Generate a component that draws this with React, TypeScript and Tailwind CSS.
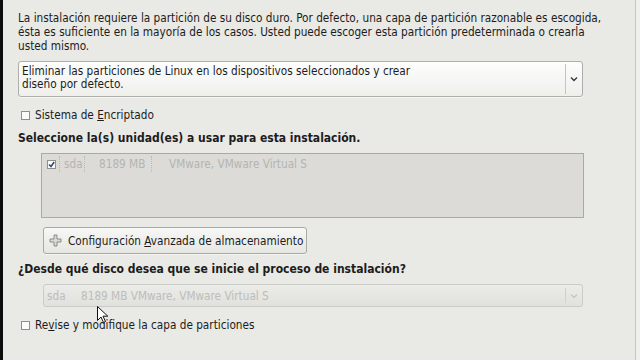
import React from 'react';

// Particionado del disco — pantalla del instalador (Anaconda, tema Clearlooks)

const Check = ({ checked = false }: { checked?: boolean }) => (
  <span className="w-[9px] h-[9px] border border-[#8f8f8b] bg-[#fbfbfa] flex items-center justify-center shrink-0">
    {checked && (
      <svg width="7" height="7" viewBox="0 0 7 7">
        <path d="M1 3.5 L3 5.5 L6.2 1" stroke="#2f4d7a" strokeWidth="1.6" fill="none" />
      </svg>
    )}
  </span>
);

const Chevron = ({ color }: { color: string }) => (
  <svg width="8" height="6" viewBox="0 0 8 6">
    <path d="M1 1.5 L4 4.5 L7 1.5" stroke={color} strokeWidth="1.4" fill="none" />
  </svg>
);

const Cursor = () => (
  <svg width="12" height="18" viewBox="0 0 12 18" className="absolute left-[97px] top-[306px]">
    <path d="M0.5 0.5 L0.5 14.5 L4 11 L6.5 16.5 L8.5 15.5 L6 10.2 L10.8 10.2 Z" fill="#fff" stroke="#111" strokeWidth="1" />
  </svg>
);

export default function App() {
  return (
    <div className="relative w-[640px] h-[360px] bg-[#e9e9e5] flex text-[11.7px] leading-[14px] text-[#1c1c1c] font-['DejaVu_Sans_Condensed','DejaVu_Sans',sans-serif] [font-stretch:condensed] overflow-hidden">
      <div className="w-[3px] bg-[#0c0c0c]" />
      <div className="w-[633px] border-r border-[#c4c4c0] pl-[15px] pt-[11px] flex flex-col items-start">
        <p>
          La instalación requiere la partición de su disco duro. Por defecto, una capa de partición razonable es escogida,
          <br />
          ésta es suficiente en la mayoría de los casos. Usted puede escoger esta partición predeterminada o crearla
          <br />
          usted mismo.
        </p>

        {/* esquema de particionado */}
        <div className="mt-[8px] w-[565px] h-[36px] rounded-[3px] border border-[#aeaeaa] bg-gradient-to-b from-[#fdfdfc] to-[#efefec] flex shadow-[0_1px_0_#f6f6f3]">
          <div className="flex-1 pl-[3px] pt-[3px] leading-[13px]">
            Eliminar las particiones de Linux en los dispositivos seleccionados y crear
            <br />
            diseño por defecto.
          </div>
          <div className="w-px my-[2px] bg-[#c4c4c0]" />
          <div className="w-[16px] flex items-center justify-center">
            <Chevron color="#3a3a3a" />
          </div>
        </div>

        <label className="mt-[11px] ml-[3px] flex items-center gap-[5px]">
          <Check />
          <span>
            Sistema de <u>E</u>ncriptado
          </span>
        </label>

        <h2 className="mt-[9px] font-bold text-[12px]">Seleccione la(s) unidad(es) a usar para esta instalación.</h2>

        {/* lista de discos */}
        <div className="mt-[8px] ml-[23px] w-[543px] h-[65px] border border-[#a9a9a5] bg-[#dcdbd7] pt-[3px] pl-[5px]">
          <div className="flex items-center h-[14px] text-[#b4b4b0]">
            <Check checked />
            <span className="ml-[3px] h-[16px] border-l border-dotted border-[#b8b8b4]" />
            <span className="ml-[4px] w-[20px]">sda</span>
            <span className="h-[16px] border-l border-dotted border-[#b8b8b4]" />
            <span className="ml-[14px] w-[52px]">8189 MB</span>
            <span className="h-[16px] border-l border-dotted border-[#b8b8b4]" />
            <span className="ml-[17px]">VMware, VMware Virtual S</span>
          </div>
        </div>

        <button className="mt-[9px] ml-[25px] w-[264px] h-[27px] rounded-[3px] border border-[#a8a8a4] bg-gradient-to-b from-[#f7f7f5] to-[#e6e6e2] flex items-center pl-[5px] gap-[6px] shadow-[0_1px_0_#f4f4f1]">
          <svg width="13" height="13" viewBox="0 0 13 13">
            <path d="M5 1 H8 V5 H12 V8 H8 V12 H5 V8 H1 V5 H5 Z" fill="#d8d8d4" stroke="#8a8a86" strokeWidth="1" />
          </svg>
          <span>
            Configuración <u>A</u>vanzada de almacenamiento
          </span>
        </button>

        <h2 className="mt-[8px] font-bold text-[12px]">¿Desde qué disco desea que se inicie el proceso de instalación?</h2>

        {/* disco de arranque (inactivo) */}
        <div className="mt-[8px] ml-[25px] w-[540px] h-[23px] rounded-[3px] border border-[#cbcbc7] bg-gradient-to-b from-[#ebebe8] to-[#e1e1dd] flex text-[#bdbdb9]">
          <div className="flex-1 flex items-center pl-[3px]">
            <span className="w-[34px]">sda</span>
            <span>8189 MB VMware, VMware Virtual S</span>
          </div>
          <div className="w-px my-[3px] bg-[#d0d0cc]" />
          <div className="w-[16px] flex items-center justify-center">
            <Chevron color="#c6c6c2" />
          </div>
        </div>

        <label className="mt-[11px] ml-[3px] flex items-center gap-[5px]">
          <Check />
          <span>
            Re<u>v</u>ise y modifique la capa de particiones
          </span>
        </label>
      </div>
      <div className="flex-1 bg-[#efefeb]" />
      <Cursor />
    </div>
  );
}
